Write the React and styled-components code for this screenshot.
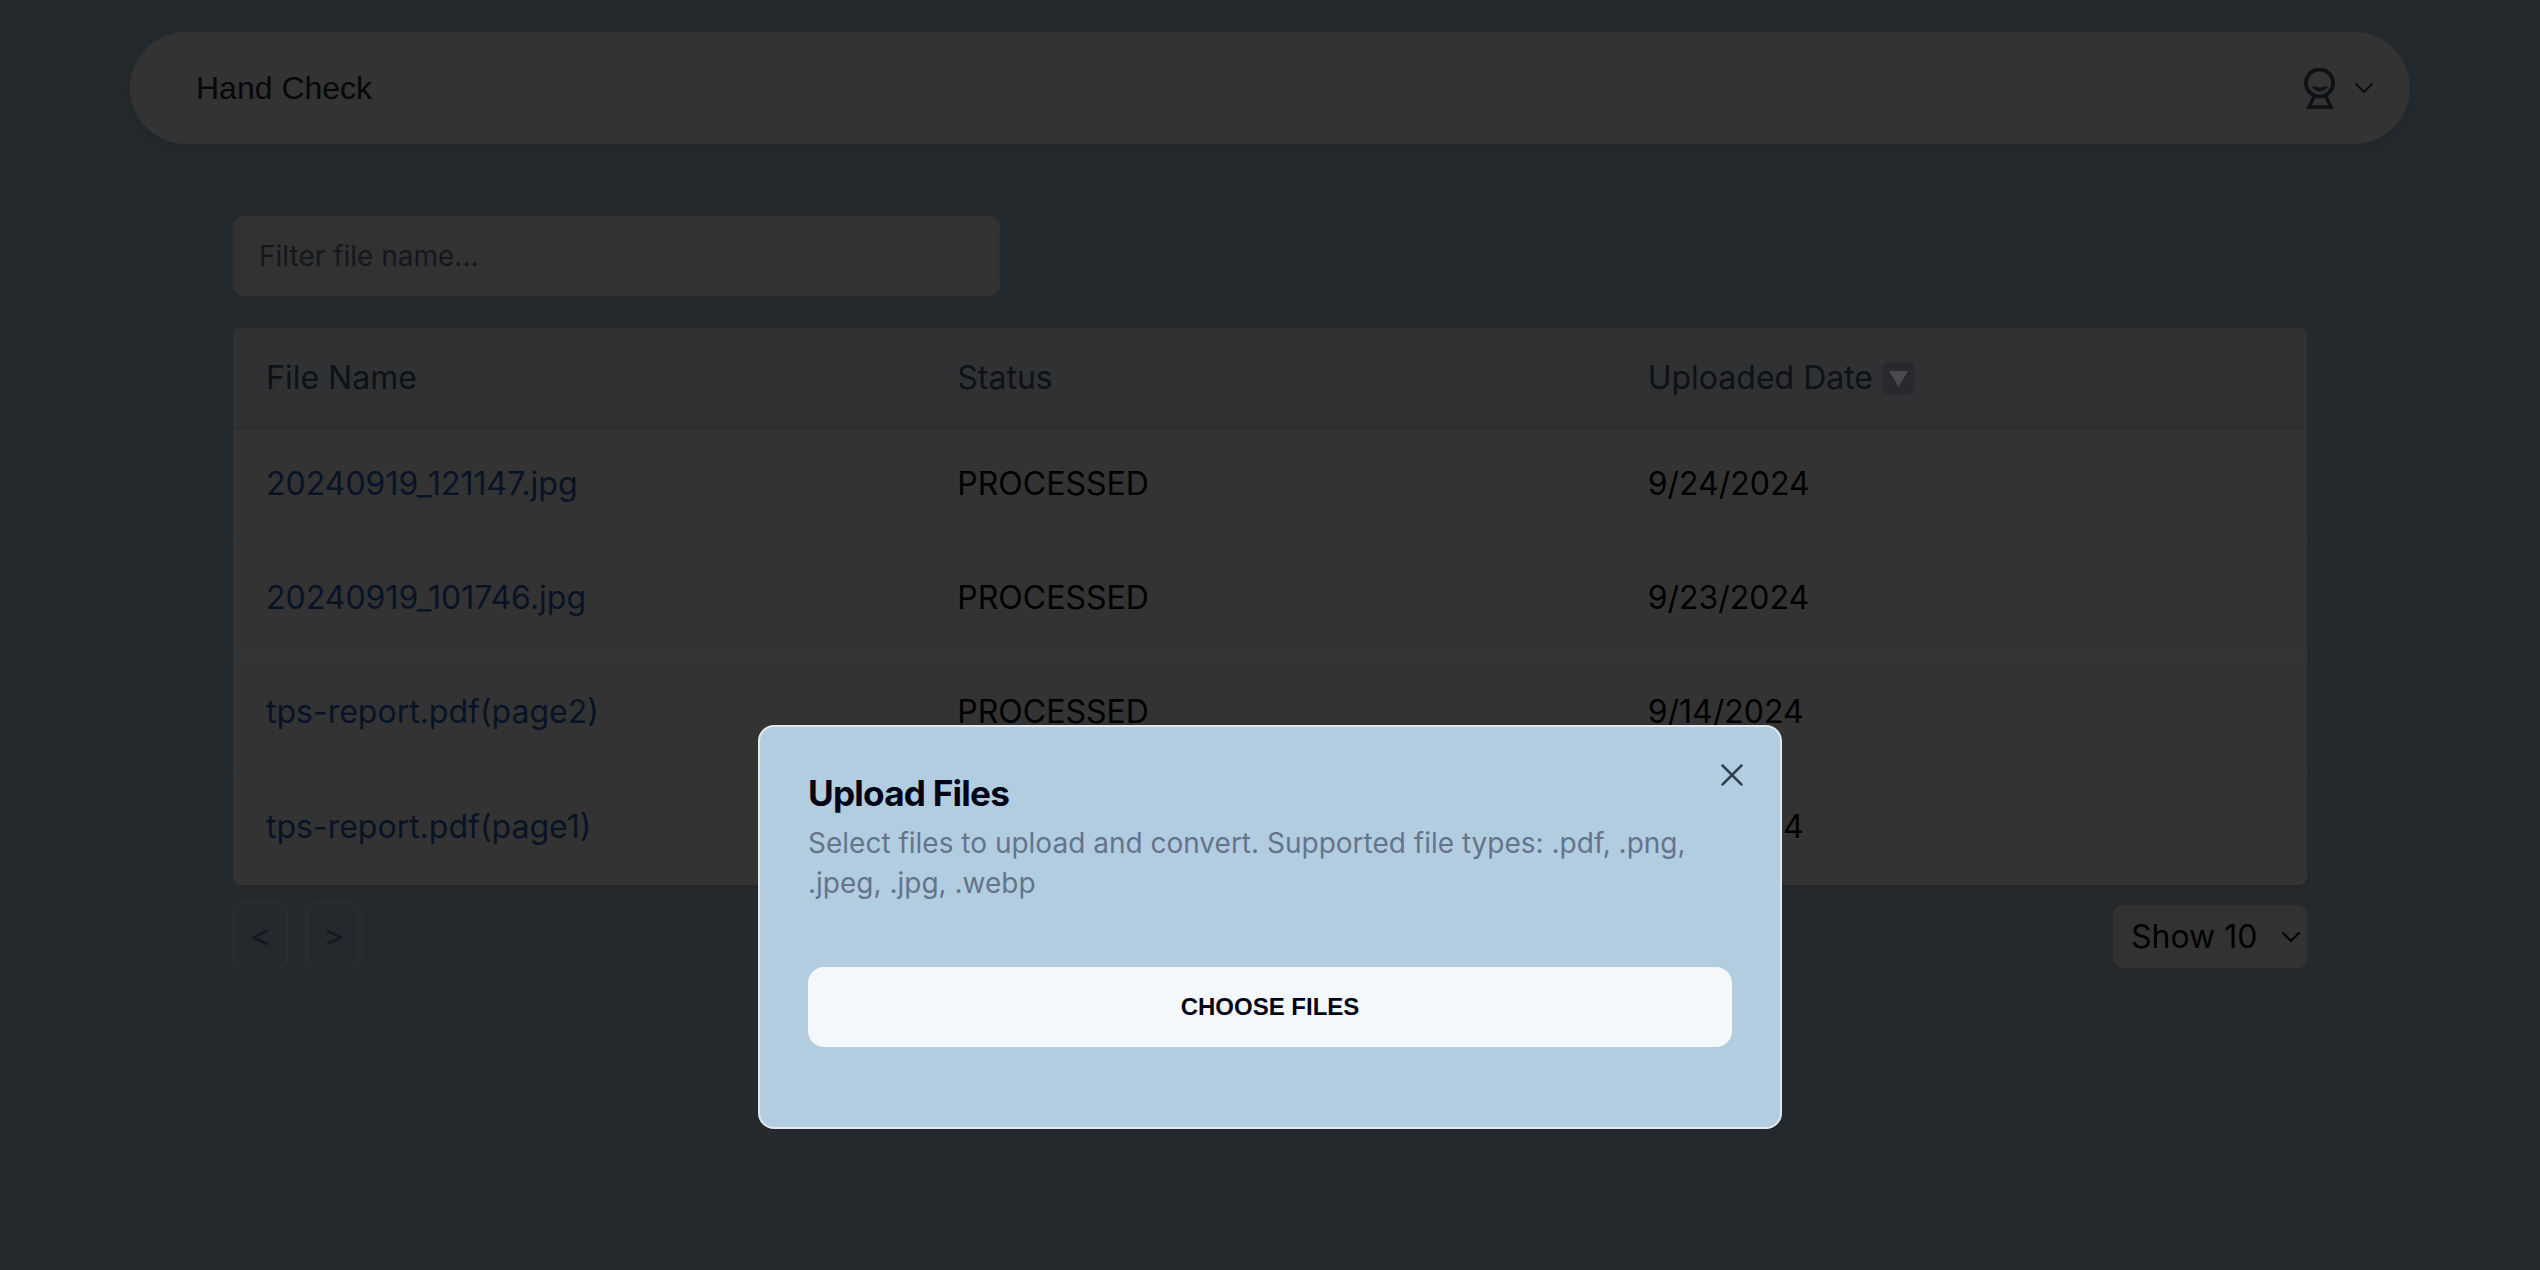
import styled, { createGlobalStyle } from 'styled-components'
import { ChevronDown, X } from 'lucide-react'

const GlobalStyle = createGlobalStyle`
	html, body {
		margin: 0;
		padding: 0;
		height: 100%;
		background: #b3cde0;
		font-family: Inter, "Liberation Sans", sans-serif;
		color: #000;
	}
`

const rows = [
	{ name: '20240919_121147.jpg', status: 'PROCESSED', date: '9/24/2024' },
	{ name: '20240919_101746.jpg', status: 'PROCESSED', date: '9/23/2024' },
	{ name: 'tps-report.pdf(page2)', status: 'PROCESSED', date: '9/14/2024' },
	{ name: 'tps-report.pdf(page1)', status: 'PROCESSED', date: '9/14/2024' },
]

function UserIcon() {
	return (
		<svg width="32" height="41" viewBox="0 0 32 41" fill="none">
			<circle cx="15.5" cy="15" r="13.5" stroke="#475569" strokeWidth="4" />
			<path d="M9 18.5 Q16 27 23 18.5 Q16 22 9 18.5 Z" fill="#475569" stroke="#475569" strokeWidth="1.6" />
			<path d="M10.5 28 L5 39 H27 L21.5 28" stroke="#475569" strokeWidth="3.6" />
		</svg>
	)
}

function App() {
	return (
		<>
			<GlobalStyle />
			<Page>
				<Navbar>
					<Brand>Hand Check</Brand>
					<UserMenu>
						<UserIcon />
						<ChevronDown size={32} strokeWidth={1.5} color="#334155" />
					</UserMenu>
				</Navbar>
				<Content>
					<Filter placeholder="Filter file name..." />
					<TableCard>
						<Table>
							<thead>
								<tr>
									<Th>File Name</Th>
									<Th>Status</Th>
									<Th>
										<SortLabel>
											Uploaded Date
											<SortBadge>
												<svg width="19" height="16" viewBox="0 0 19 16">
													<path d="M0 0 H19 L9.5 16 Z" fill="#4a4a4a" />
												</svg>
											</SortBadge>
										</SortLabel>
									</Th>
								</tr>
							</thead>
							<tbody>
								{rows.map((row) => (
									<Row key={row.name}>
										<Td>
											<FileLink href="#">{row.name}</FileLink>
										</Td>
										<Td>{row.status}</Td>
										<Td>{row.date}</Td>
									</Row>
								))}
							</tbody>
						</Table>
					</TableCard>
					<Footer>
						<Pager>
							<PageButton>&lt;</PageButton>
							<PageButton>&gt;</PageButton>
						</Pager>
						<PageSize>
							Show 10
							<ChevronDown size={32} strokeWidth={1.5} color="#000" />
						</PageSize>
					</Footer>
				</Content>
			</Page>
			<Overlay />
			<Modal>
				<CloseButton>
					<X size={38} strokeWidth={1.6} color="#334155" />
				</CloseButton>
				<Title>Upload Files</Title>
				<Description>
					Select files to upload and convert. Supported file types: .pdf, .png, .jpeg, .jpg, .webp
				</Description>
				<ChooseButton>CHOOSE FILES</ChooseButton>
			</Modal>
		</>
	)
}

export default App

const Page = styled.div`
	min-height: 1270px;
	padding: 32px 130px 0;
	box-sizing: border-box;
`

const Navbar = styled.nav`
	height: 112px;
	border-radius: 56px;
	background: #fcfcfc;
	box-shadow: 0 4px 16px rgba(0, 0, 0, 0.12);
	display: flex;
	align-items: center;
	justify-content: space-between;
	padding: 0 30px 0 66px;
`

const Brand = styled.span`
	font-family: 'Liberation Sans', Arial, sans-serif;
	font-size: 32px;
	color: #1e293b;
`

const UserMenu = styled.div`
	display: flex;
	align-items: center;
	gap: 12px;
`

const Content = styled.main`
	padding: 72px 103px 0;
`

const Filter = styled.input`
	display: block;
	box-sizing: border-box;
	width: 767px;
	height: 80px;
	padding: 0 24px;
	border: 2px solid #f4f4f4;
	border-radius: 10px;
	background: #fafafa;
	font-family: inherit;
	font-size: 28px;
	outline: none;

	&::placeholder {
		color: #64748b;
		opacity: 1;
	}
`

const TableCard = styled.div`
	margin-top: 32px;
	padding-bottom: 1px;
	border-radius: 8px;
	overflow: hidden;
	background: #fff;
	box-shadow: 0 2px 6px rgba(0, 0, 0, 0.1);
`

const Table = styled.table`
	width: 100%;
	border-collapse: collapse;
	table-layout: fixed;
`

const Th = styled.th`
	height: 100px;
	box-sizing: border-box;
	padding: 0 33px;
	border-bottom: 2px solid #d8dee6;
	background: #f1f5f9;
	font-size: 32px;
	font-weight: 400;
	text-align: left;
	color: #475569;

	&:last-child {
		padding-left: 32px;
	}
`

const SortLabel = styled.span`
	display: inline-flex;
	align-items: center;
	gap: 9px;
`

// sits above the backdrop: the emoji in the reference stays brighter than the dimmed page
const SortBadge = styled.span`
	position: relative;
	z-index: 2;
	width: 32px;
	height: 32px;
	border-radius: 6px;
	background: #27292f;
	display: flex;
	align-items: center;
	justify-content: center;
	padding-top: 2px;
	box-sizing: border-box;
`

const Row = styled.tr`
	height: 114px;

	& + & td {
		border-top: 2px solid #f1f5f9;
	}
`

const Td = styled.td`
	box-sizing: border-box;
	padding: 0 33px 3px;
	font-size: 32px;

	&:last-child {
		padding-left: 32px;
	}
`

const FileLink = styled.a`
	color: #2a5fb8;
	text-decoration: none;
`

const Footer = styled.div`
	display: flex;
	align-items: flex-start;
	justify-content: space-between;
	margin-top: 17px;
`

const Pager = styled.div`
	display: flex;
	gap: 18px;
`

const PageButton = styled.button`
	width: 55px;
	height: 67px;
	padding: 0;
	border: 2px solid #d5dde5;
	border-radius: 10px;
	background: transparent;
	font-family: inherit;
	font-size: 32px;
	color: #64748b;
`

const PageSize = styled.div`
	box-sizing: border-box;
	width: 194px;
	height: 63px;
	margin-top: 3px;
	padding: 0 0 0 18px;
	border-radius: 10px;
	background: #fafafa;
	display: flex;
	align-items: center;
	justify-content: space-between;
	font-size: 32px;
`

const Overlay = styled.div`
	position: fixed;
	inset: 0;
	z-index: 1;
	background: rgba(0, 0, 0, 0.8);
`

const Modal = styled.div`
	position: fixed;
	z-index: 3;
	top: 725px;
	left: 758px;
	box-sizing: border-box;
	width: 1024px;
	height: 404px;
	padding: 44px 48px 0;
	border: 2px solid #e2e8f0;
	border-radius: 16px;
	background: #b3cde0;
`

const CloseButton = styled.button`
	position: absolute;
	top: 29px;
	right: 29px;
	padding: 0;
	border: 0;
	background: none;
	display: flex;
`

const Title = styled.h2`
	margin: 0;
	font-size: 35.2px;
	line-height: 44px;
	font-weight: 700;
	letter-spacing: -0.8px;
	color: #020617;
`

const Description = styled.p`
	margin: 8px 0 0;
	font-size: 28px;
	line-height: 40px;
	color: #64748b;
`

const ChooseButton = styled.button`
	display: block;
	width: 100%;
	height: 80px;
	margin-top: 64px;
	border: 0;
	border-radius: 16px;
	background: #f5f8fb;
	font-family: 'Liberation Sans', Arial, sans-serif;
	font-size: 24px;
	font-weight: 700;
	color: #020617;
`
